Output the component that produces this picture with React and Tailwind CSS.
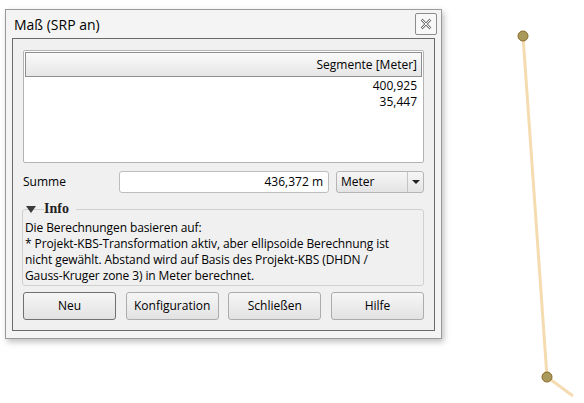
import React from "react";

const font = { fontFamily: '"Open Sans", "Noto Sans", sans-serif' };

function Btn({ children, dark }) {
  return (
    <button className={`h-[28px] w-[93px] rounded-[3px] border ${dark ? "border-[#707070]" : "border-[#acacac]"} bg-gradient-to-b from-[#f6f6f6] to-[#e2e2e2] text-[12px] text-black`}>
      {children}
    </button>
  );
}

export default function App() {
  return (
    <div className="relative h-[403px] w-[584px] overflow-hidden bg-white" style={font}>
      <svg className="absolute left-0 top-0" width="584" height="403">
        <polyline points="523,36 547,377 573,396" fill="none" stroke="#f5dcb0" strokeWidth="3" />
        <circle cx="523" cy="36" r="5" fill="#a99a5c" stroke="#8a6a2a" strokeWidth="1" />
        <circle cx="547" cy="377" r="5" fill="#a99a5c" stroke="#8a6a2a" strokeWidth="1" />
      </svg>
      <div className="relative ml-[5px] mt-[9px] flex h-[330px] w-[437px] flex-col border border-[#9a9a9a] bg-[#f4f4f4] shadow-[2px_3px_6px_rgba(0,0,0,0.25)]">
        <div className="flex h-[28px] items-center justify-between pl-[8px] pr-[4px]">
          <span className="text-[14px] text-black">Maß (SRP an)</span>
          <div className="flex h-[22px] w-[22px] items-center justify-center rounded-[2px] border border-[#8c8c8c] bg-[#f8f8f8]">
            <svg width="12" height="12" viewBox="0 0 12 12">
              <path d="M1.5 1.5 L10.5 10.5 M10.5 1.5 L1.5 10.5" stroke="#7a7a7a" strokeWidth="2.6" />
              <path d="M1.5 1.5 L10.5 10.5 M10.5 1.5 L1.5 10.5" stroke="#f8f8f8" strokeWidth="1" />
            </svg>
          </div>
        </div>
        <div className="mx-[6px] flex h-[293px] flex-col border border-[#6a6a6a] bg-[#f0f0f0] px-[10px] pt-[11px] text-[12px] text-black">
          <div className="flex h-[113px] flex-col rounded-[2px] border border-[#b4b4b4] bg-white p-px">
            <div className="flex h-[25px] items-center justify-end border border-[#8e8e8e] bg-gradient-to-b from-[#fafafa] to-[#e6e6e6] pr-[4px] text-[12px]">
              Segmente [Meter]
            </div>
            <div className="flex flex-col items-end pr-[5px] pt-[1px] leading-[16px]">
              <span>400,925</span>
              <span>35,447</span>
            </div>
          </div>
          <div className="mt-[8px] flex h-[22px] items-center">
            <span className="w-[96px]">Summe</span>
            <div className="flex h-[22px] w-[210px] items-center justify-end rounded-[3px] border border-[#bdbdbd] bg-white pr-[5px]">
              436,372 m
            </div>
            <div className="ml-[7px] flex h-[22px] flex-1 items-center rounded-[3px] border border-[#b5b5b5] bg-gradient-to-b from-[#f6f6f6] to-[#e4e4e4]">
              <span className="flex-1 pl-[4px]">Meter</span>
              <div className="flex h-full w-[16px] items-center justify-center border-l border-[#c4c4c4]">
                <svg width="8" height="4" viewBox="0 0 8 4"><path d="M0 0 L8 0 L4 4 Z" fill="#222" /></svg>
              </div>
            </div>
          </div>
          <div className="relative mt-[9px] h-[84px] -ml-px">
            <div className="absolute inset-x-0 bottom-0 top-[7px] rounded-[3px] border border-[#d0d0d0]" />
            <div className="relative flex h-[14px] items-center">
              <svg className="ml-[4px]" width="10" height="7" viewBox="0 0 10 7"><path d="M0 0 L10 0 L5 7 Z" fill="#3a3a3a" /></svg>
              <span className="ml-[8px] bg-[#f0f0f0] pr-[7px] text-[14px] font-bold leading-[14px] text-[#222]" style={{ fontFamily: '"Liberation Serif", serif' }}>Info</span>
            </div>
            <div className="relative whitespace-nowrap pl-[3px] pt-[4px] leading-[16px] tracking-[-0.1px]">
              Die Berechnungen basieren auf:<br />
              * Projekt-KBS-Transformation aktiv, aber ellipsoide Berechnung ist<br />
              nicht gewählt. Abstand wird auf Basis des Projekt-KBS (DHDN /<br />
              Gauss-Kruger zone 3) in Meter berechnet.
            </div>
          </div>
          <div className="mt-[6px] flex justify-between">
            <Btn dark>Neu</Btn>
            <Btn>Konfiguration</Btn>
            <Btn>Schließen</Btn>
            <Btn>Hilfe</Btn>
          </div>
        </div>
      </div>
    </div>
  );
}
